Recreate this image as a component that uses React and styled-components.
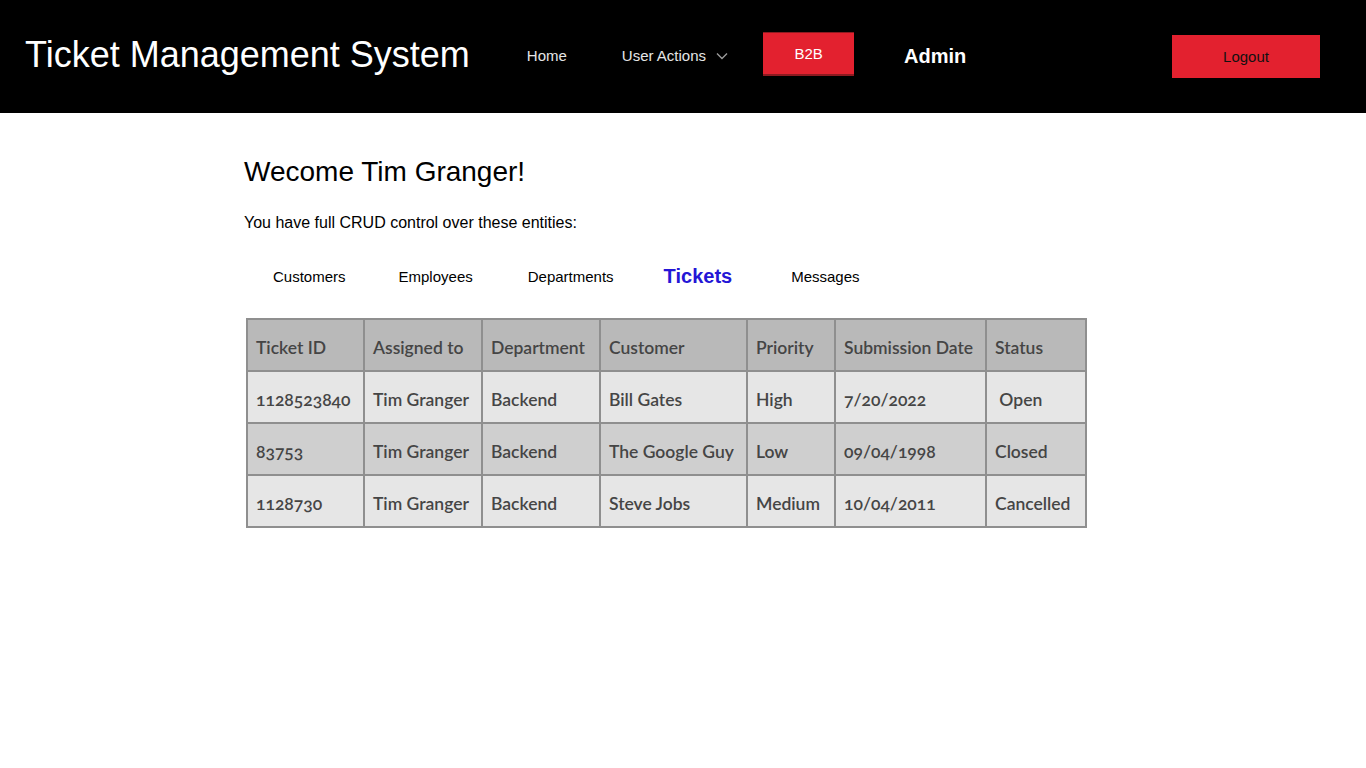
import React from "react";
import styled, { createGlobalStyle } from "styled-components";

const GlobalStyle = createGlobalStyle`
  html, body {
    margin: 0;
    padding: 0;
    background: #fff;
    font-family: "Liberation Sans", Arial, sans-serif;
  }
`;

const Header = styled.header`
  height: 113px;
  background: #000;
  display: flex;
  align-items: center;
  padding: 0 46px 0 25px;
  box-sizing: border-box;
`;

const Brand = styled.h1`
  margin: 0 0 4px 0;
  font-weight: 400;
  font-size: 36px;
  color: #fff;
  white-space: nowrap;
`;

const Nav = styled.nav`
  display: flex;
  align-items: center;
  margin-left: 57px;
`;

const NavLink = styled.a`
  color: #e6e6e6;
  font-size: 15px;
  text-decoration: none;
  margin: 0 ${(p) => p.$gap || 0}px 2px 0;
  display: flex;
  align-items: center;
  gap: 10px;
`;

const RedButton = styled.button`
  background: #e3212f;
  border: none;
  font-family: "Liberation Sans", Arial, sans-serif;
  font-size: 15px;
  color: ${(p) => (p.$dark ? "#111" : "#fff")};
  width: ${(p) => p.$w}px;
  height: ${(p) => p.$h}px;
  padding: 0;
  cursor: pointer;
`;

const B2B = styled(RedButton)`
  border-top: 1px solid #8e1a20;
  border-bottom: 2px solid #8e1a20;
  margin: 0 50px 5px 0;
`;

const Admin = styled.span`
  color: #fff;
  font-weight: 700;
  font-size: 20px;
`;

const Spacer = styled.div`
  flex: 1;
`;

const Main = styled.main`
  padding: 43px 0 0 244px;
`;

const Welcome = styled.h2`
  margin: 0;
  font-weight: 400;
  font-size: 28px;
  color: #000;
`;

const Intro = styled.p`
  margin: 26px 0 0;
  font-size: 16px;
  color: #000;
`;

const Tabs = styled.div`
  display: flex;
  align-items: center;
  margin-top: 24px;
  height: 40px;
`;

const TabLead = styled.span`
  width: 29px;
`;

const Tab = styled.span`
  padding: 0 ${(p) => p.$pad}px 0 0;
  font-size: ${(p) => (p.$active ? "20px" : "15px")};
  font-weight: ${(p) => (p.$active ? 700 : 400)};
  color: ${(p) => (p.$active ? "#2416d6" : "#000")};
`;

const TableWrap = styled.div`
  margin: 22px 0 0 2px;
`;

const Table = styled.table`
  border-collapse: collapse;
  font-family: Lato, "Open Sans", sans-serif;
  font-variant-numeric: oldstyle-nums;
  font-size: 17.5px;
  font-weight: 600;
  color: #454545;
  border: 2px solid #8f8f8f;
`;

const Row = styled.tr`
  background: ${(p) => p.$bg};
`;

const Cell = styled.td`
  border: 2px solid #8f8f8f;
  height: 52px;
  padding: 4px 8px 0;
  box-sizing: border-box;
  width: ${(p) => p.$w}px;
  white-space: nowrap;
`;

const HeadCell = styled(Cell).attrs({ as: "th" })`
  text-align: left;
  font-weight: 600;
`;

const Chevron = () => (
  <svg width="12" height="8" viewBox="0 0 12 8" fill="none" stroke="#9a9a9a" strokeWidth="1.4">
    <path d="M1 1.5 L6 6.5 L11 1.5" />
  </svg>
);

const widths = [117, 118, 118, 147, 88, 151, 100];
const headers = ["Ticket ID", "Assigned to", "Department", "Customer", "Priority", "Submission Date", "Status"];
const rows = [
  ["1128523840", "Tim Granger", "Backend", "Bill Gates", "High", "7/20/2022", "\u00a0Open"],
  ["83753", "Tim Granger", "Backend", "The Google Guy", "Low", "09/04/1998", "Closed"],
  ["1128730", "Tim Granger", "Backend", "Steve Jobs", "Medium", "10/04/2011", "Cancelled"],
];
const rowBg = ["#e6e6e6", "#cfcfcf", "#e6e6e6"];

const tabs = [
  { label: "Customers", pad: 53 },
  { label: "Employees", pad: 55 },
  { label: "Departments", pad: 50 },
  { label: "Tickets", pad: 59, active: true },
  { label: "Messages", pad: 0 },
];

export default function App() {
  return (
    <>
      <GlobalStyle />
      <Header>
        <Brand>Ticket Management System</Brand>
        <Nav>
          <NavLink href="#" $gap={55}>Home</NavLink>
          <NavLink href="#" $gap={35}>
            User Actions <Chevron />
          </NavLink>
          <B2B $w={91} $h={44}>B2B</B2B>
          <Admin>Admin</Admin>
        </Nav>
        <Spacer />
        <RedButton $dark $w={148} $h={43}>Logout</RedButton>
      </Header>
      <Main>
        <Welcome>Wecome Tim Granger!</Welcome>
        <Intro>You have full CRUD control over these entities:</Intro>
        <Tabs>
          <TabLead />
          {tabs.map((t) => (
            <Tab key={t.label} $pad={t.pad} $active={t.active}>
              {t.label}
            </Tab>
          ))}
        </Tabs>
        <TableWrap>
          <Table>
            <thead>
              <Row $bg="#b9b9b9">
                {headers.map((h, i) => (
                  <HeadCell key={h} $w={widths[i]}>{h}</HeadCell>
                ))}
              </Row>
            </thead>
            <tbody>
              {rows.map((r, ri) => (
                <Row key={ri} $bg={rowBg[ri]}>
                  {r.map((c, ci) => (
                    <Cell key={ci} $w={widths[ci]}>{c}</Cell>
                  ))}
                </Row>
              ))}
            </tbody>
          </Table>
        </TableWrap>
      </Main>
    </>
  );
}
